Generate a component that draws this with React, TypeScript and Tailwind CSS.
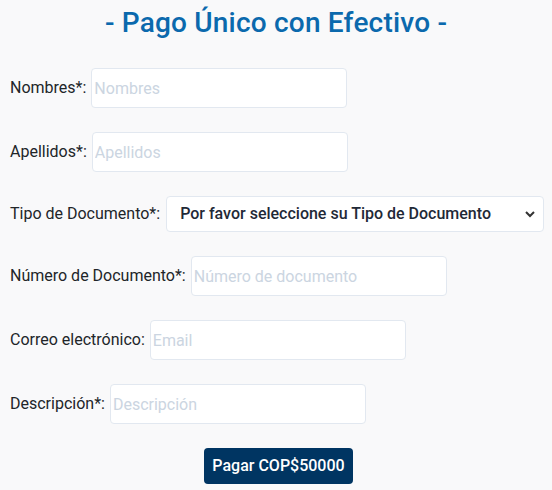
import React from "react";

const font = { fontFamily: 'Roboto, "Noto Sans", sans-serif' };

function Row({ label, placeholder, width = "w-[256px]" }: { label: string; placeholder: string; width?: string }) {
  return (
    <div className="flex items-center h-[40px] mb-[24px]">
      <label className="text-[16px] text-[#212529] mr-[5px] whitespace-nowrap">{label}</label>
      <input
        placeholder={placeholder}
        className={`${width} h-[40px] bg-white border border-[#e2e8f0] rounded-[4px] px-[2px] text-[16px] placeholder:text-[#cbd5e1] outline-none`}
      />
    </div>
  );
}

export default function App() {
  return (
    <div className="w-[552px] h-[490px] bg-[#f9f9fa] px-[10px] pt-[5px]" style={font}>
      <h1 className="text-center text-[28px] font-medium text-[#0b69ad] leading-[36px] mb-[27px] tracking-[0.2px]">
        - Pago Único con Efectivo -
      </h1>
      <Row label="Nombres*:" placeholder="Nombres" />
      <Row label="Apellidos*:" placeholder="Apellidos" />
      <div className="flex items-center h-[36px] mb-[24px]">
        <label className="text-[16px] text-[#212529] mr-[6px] whitespace-nowrap">Tipo de Documento*:</label>
        <div className="relative flex-1 h-[36px] bg-white border border-[#e2e8f0] rounded-[4px] flex items-center pl-[13px] mr-[-2px]">
          <span className="text-[16px] font-medium text-[#1f2937]">Por favor seleccione su Tipo de Documento</span>
          <svg className="absolute right-[8px] top-[13px]" width="10" height="8" viewBox="0 0 10 8">
            <path d="M1 2 L5 6 L9 2" stroke="#333" strokeWidth="2" fill="none" />
          </svg>
        </div>
      </div>
      <Row label="Número de Documento*:" placeholder="Número de documento" />
      <Row label="Correo electrónico:" placeholder="Email" />
      <Row label="Descripción*:" placeholder="Descripción" />
      <div className="flex justify-center">
        <button className="h-[36px] px-[8px] bg-[#003562] text-white text-[16px] font-medium rounded-[4px] ml-[5px]">
          Pagar COP$50000
        </button>
      </div>
    </div>
  );
}
